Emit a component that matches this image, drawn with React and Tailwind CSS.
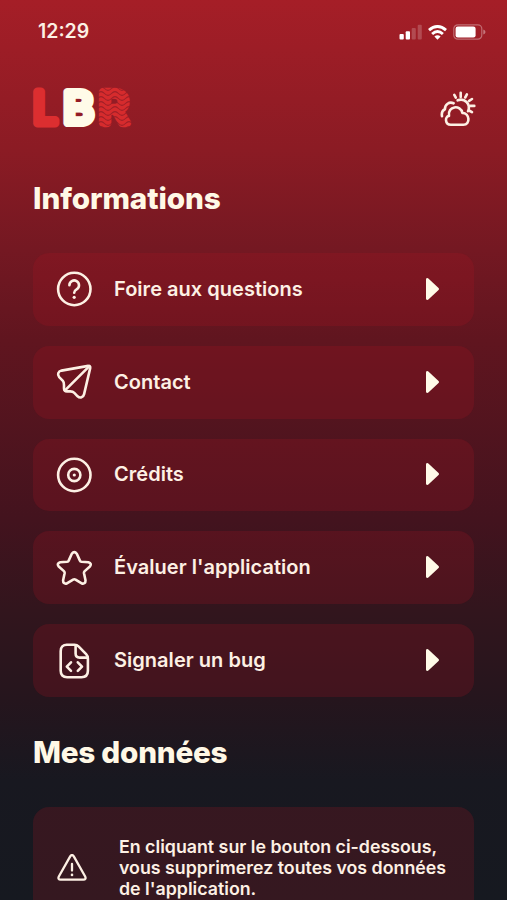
const stroke = {
    fill: "none",
    stroke: "currentColor",
    strokeWidth: 2.6,
    strokeLinecap: "round",
    strokeLinejoin: "round",
};

const HelpIcon = () => (
    <svg className="w-9 h-9" viewBox="0 0 36 36" {...stroke}>
        <circle cx="18.3" cy="18" r="16.2" />
        <path d="M13.4 14.2a4.8 4.8 0 1 1 7.2 4.2c-1.7 1-2.4 1.7-2.4 3.4" />
        <circle cx="18.2" cy="26.3" r="1.6" fill="currentColor" stroke="none" />
    </svg>
);

const SendIcon = () => (
    <svg className="w-9 h-9" viewBox="0 0 36 36" {...stroke}>
        <path d="M32.3 1.9L5.5 6.6C2.2 7.3 1 10.6 3.2 13.1L6.9 16.8C8 18 8 19 8 21.2V24.3C8 26.3 9 27.4 11 27.4H14.3C16.2 27.4 17 27.6 18.3 28.9L21.6 32.3C24.1 34.6 27.3 33.5 28.1 30.1L34.2 4.1C34.5 2.6 33.8 1.6 32.3 1.9Z" />
        <path d="M9 26.4L32.9 2.6" />
    </svg>
);

const DiscIcon = () => (
    <svg className="w-9 h-9" viewBox="0 0 36 36" {...stroke}>
        <circle cx="18.3" cy="18" r="16.2" />
        <circle cx="18.3" cy="18" r="6.1" />
        <circle cx="18.3" cy="18" r="1.6" fill="currentColor" stroke="none" />
    </svg>
);

const StarIcon = () => (
    <svg className="w-9 h-9" viewBox="0 0 36 36" {...stroke}>
        <path d="M15.8 3.7Q18.3 0.5 20.8 3.7L23.8 10.4Q24.3 11.6 25.6 11.8L32.4 12.3Q36.2 13.4 33.9 16.5L28.7 21.1Q27.8 22 28 23.2L29.5 30.2Q29.6 34.4 25.7 33.4L19.5 29.6Q18.3 28.9 17.1 29.6L10.9 33.4Q7 34.4 7.1 30.2L8.6 23.2Q8.8 22 7.9 21.1L2.7 16.5Q0.4 13.4 4.2 12.3L11 11.8Q12.3 11.6 12.8 10.4Z" />
    </svg>
);

const BugFileIcon = () => (
    <svg className="w-9 h-9" viewBox="0 0 36 36" {...stroke}>
        <path d="M10.5 1.8H18.5C20.5 1.8 21.4 2.2 22.8 3.6L30.1 11.2C31.5 12.6 31.9 13.7 31.9 15.7V27.8Q31.9 34.2 25.5 34.2H11.1Q4.7 34.2 4.7 27.8V8.2Q4.7 1.8 11.1 1.8Z" />
        <path d="M19.6 2.2V10.6Q19.6 14.6 23.6 14.6H31.5" />
        <path d="M15 19.3L10.8 23.6L15 27.9M21.8 19.3L26 23.6L21.8 27.9" />
    </svg>
);

const WarningIcon = () => (
    <svg className="w-[30px] h-[27px]" viewBox="0 0 30 27" {...stroke} strokeWidth="2.3">
        <path d="M13.2 2.4Q15 -0.3 16.8 2.4L28.3 22.8Q29.3 25.4 26.4 25.6H3.6Q0.7 25.4 1.7 22.8Z" />
        <path d="M15 10V16.5" />
        <circle cx="15" cy="20.9" r="1.3" fill="currentColor" stroke="none" />
    </svg>
);

const WeatherIcon = () => (
    <svg className="w-9 h-9 mt-0.5" viewBox="0 0 36 36" {...stroke}>
        <path d="M10.8 33.8C4.9 33.8 4.6 25.6 9 24.9C7.2 14.8 20.8 13.4 22.4 21.9C29.9 22.1 30.6 33.8 23.4 33.8Z" />
        <path d="M2 25.2C1.4 22 2.3 19.4 4.9 18.2C4.9 13.4 9.2 10.3 13.6 12.3" />
        <path d="M17.6 9.3C24.5 6.6 31.2 13 28 20.2" />
        <path d="M14.3 3.8L15.8 6.6M20.7 1.8V6M26.9 3.4L25.2 6.5M32 8L29.1 9.8M34.3 14.9H30.4M32 21.2L29 19.5" />
    </svg>
);

const Arrow = () => (
    <svg className="w-[15px] h-6" viewBox="0 0 15 24">
        <path
            d="M2.4 2.4L12.6 12L2.4 21.6Z"
            fill="currentColor"
            stroke="currentColor"
            strokeWidth="2.8"
            strokeLinejoin="round"
        />
    </svg>
);

function Logo() {
    return (
        <svg
            className="w-[110px] h-[60px] -my-2"
            viewBox="0 -8 110 60"
            fontFamily="Inter, sans-serif"
            fontWeight="300"
            fontSize="42"
            strokeLinejoin="round"
            strokeLinecap="round"
        >
            <defs>
                <pattern id="waves" width="14" height="5" patternUnits="userSpaceOnUse">
                    <rect width="14" height="5" fill="#d62b2d" />
                    <path
                        d="M-3.5 2.5Q0 -1.3 3.5 2.5T10.5 2.5T17.5 2.5"
                        fill="none"
                        stroke="#a01e26"
                        strokeWidth="1.1"
                    />
                </pattern>
            </defs>
            <text x="2.6" y="37" fill="#dc2e30" stroke="#dc2e30" strokeWidth="9" textLength="23.5" lengthAdjust="spacingAndGlyphs">
                L
            </text>
            <text x="32.4" y="37" fill="#fffbe8" stroke="#fffbe8" strokeWidth="8.2" textLength="30" lengthAdjust="spacingAndGlyphs">
                B
            </text>
            <text x="68" y="37" fill="url(#waves)" stroke="url(#waves)" strokeWidth="8.4" textLength="29" lengthAdjust="spacingAndGlyphs">
                R
            </text>
        </svg>
    );
}

function StatusBar() {
    return (
        <div className="flex items-center justify-between h-6 pl-[38px] pr-[21px]">
            <span className="text-[19.5px] font-semibold">12:29</span>
            <div className="flex items-center gap-1.5">
                <svg className="w-[23px] h-4" viewBox="0 0 23 16" fill="#fff">
                    <rect x="0.5" y="10" width="4.3" height="5.5" rx="1" />
                    <rect x="6.7" y="7.2" width="4.3" height="8.3" rx="1" />
                    <rect x="12.7" y="4" width="4.1" height="11.5" rx="1" opacity="0.2" />
                    <rect x="18.7" y="0.7" width="4.1" height="14.8" rx="1" opacity="0.2" />
                </svg>
                <svg className="w-[19px] h-[15px]" viewBox="0 0 19 15" fill="none" stroke="#fff" strokeWidth="2.9">
                    <path d="M1 5.2Q9.5 -2.2 18 5.2" />
                    <path d="M4.1 9Q9.5 4.2 14.9 9" />
                    <path d="M9.5 14.8L6.4 11.6Q9.5 9 12.6 11.6Z" fill="#fff" stroke="none" />
                </svg>
                <svg className="w-[33px] h-4" viewBox="0 0 33 16">
                    <rect x="0.8" y="0.8" width="28" height="14.4" rx="4" fill="none" stroke="#fff" strokeOpacity="0.35" strokeWidth="1.2" />
                    <rect x="2.6" y="2.6" width="20" height="10.8" rx="2.2" fill="#fff" />
                    <path d="M30.3 5.5Q32.5 6.4 32.5 8T30.3 10.5Z" fill="#fff" opacity="0.4" />
                </svg>
            </div>
        </div>
    );
}

const items = [
    { label: "Foire aux questions", icon: HelpIcon },
    { label: "Contact", icon: SendIcon },
    { label: "Crédits", icon: DiscIcon },
    { label: "Évaluer l'application", icon: StarIcon },
    { label: "Signaler un bug", icon: BugFileIcon },
];

export default function App() {
    return (
        <div className="w-[507px] h-[900px] overflow-hidden pt-5 text-[#fdf0e4] font-['Inter',sans-serif] bg-[linear-gradient(180deg,#a51e27_0px,#8b1b24_150px,#741822_250px,#60151f_340px,#43131e_520px,#32151d_610px,#25151d_700px,#181820_780px,#161920_900px)]">
            <StatusBar />

            {/* Header */}
            <div className="flex items-center justify-between mt-[42px] pl-[31px] pr-[31px]">
                <Logo />
                <WeatherIcon />
            </div>

            {/* Informations */}
            <h1 className="mt-[48px] ml-[33px] text-[29.7px] leading-[40px] font-extrabold tracking-[-0.1px] text-[#fff8e6]">
                Informations
            </h1>
            <div className="flex flex-col gap-5 mt-[35px] ml-[33px] w-[441px]">
                {items.map(({ label, icon: Icon }) => (
                    <button
                        key={label}
                        className="flex items-center h-[72.8px] pl-[23px] pr-[34px] rounded-[16px] bg-[#b41424]/20"
                    >
                        <Icon />
                        <span className="ml-[22px] -mt-px text-[20px] font-semibold tracking-[0.03px]">{label}</span>
                        <span className="ml-auto -mt-px text-[#fffbe8]">
                            <Arrow />
                        </span>
                    </button>
                ))}
            </div>

            {/* Mes données */}
            <h1 className="mt-[35px] ml-[33px] text-[29.7px] leading-[40px] font-extrabold tracking-[-0.25px] text-[#fff8e6]">
                Mes données
            </h1>
            <div className="flex items-center mt-[35px] ml-[33px] w-[441px] h-[121px] pl-[24px] rounded-[16px] bg-[#b41424]/20">
                <WarningIcon />
                <p className="ml-[32px] pt-px text-[17.8px] leading-[21px] font-semibold whitespace-nowrap">
                    En cliquant sur le bouton ci-dessous,
                    <br />
                    vous supprimerez toutes vos données
                    <br />
                    de l'application.
                </p>
            </div>
        </div>
    );
}
